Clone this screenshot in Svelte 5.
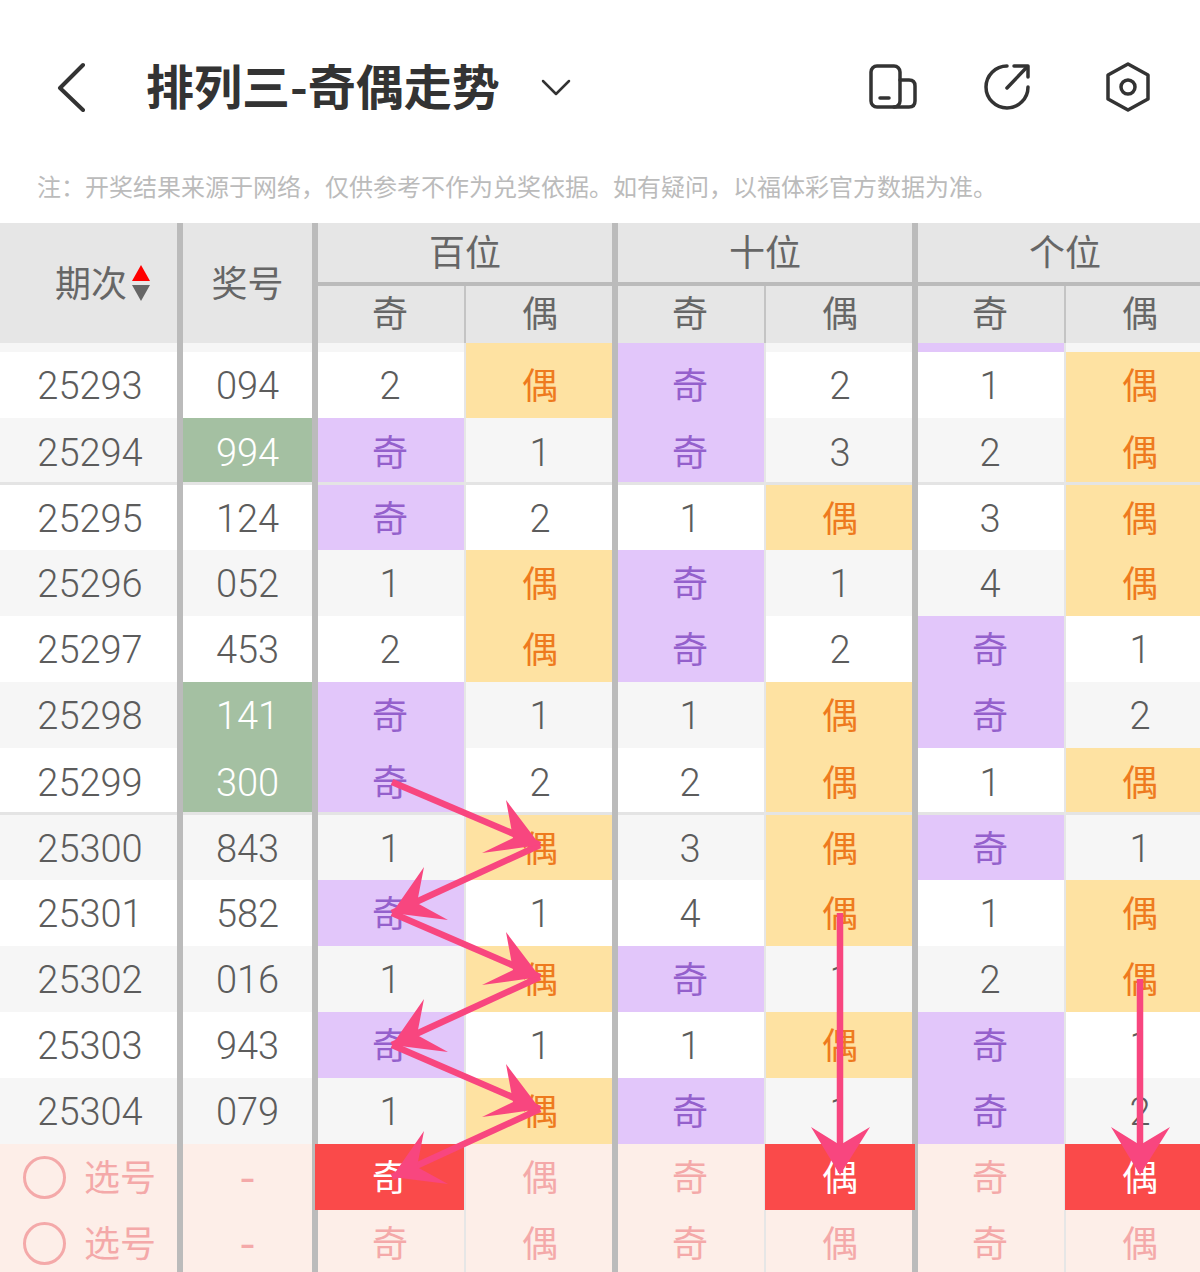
<script>
	// o = 奇 hit, e = 偶 hit, number = miss count
	const rows = [
		["25293", "094", false, [2, "e", "o", 2, 1, "e"]],
		["25294", "994", true, ["o", 1, "o", 3, 2, "e"]],
		["25295", "124", false, ["o", 2, 1, "e", 3, "e"]],
		["25296", "052", false, [1, "e", "o", 1, 4, "e"]],
		["25297", "453", false, [2, "e", "o", 2, "o", 1]],
		["25298", "141", true, ["o", 1, 1, "e", "o", 2]],
		["25299", "300", true, ["o", 2, 2, "e", 1, "e"]],
		["25300", "843", false, [1, "e", 3, "e", "o", 1]],
		["25301", "582", false, ["o", 1, 4, "e", 1, "e"]],
		["25302", "016", false, [1, "e", "o", 1, 2, "e"]],
		["25303", "943", false, ["o", 1, 1, "e", "o", 1]],
		["25304", "079", false, [1, "e", "o", 1, "o", 2]]
	];
	const peek = ["", "e", "o", "", "o", ""];
	const groups = ["百位", "十位", "个位"];
	const picks = [[0, 3, 5], []];

	const label = (v) => (v === "o" ? "奇" : v === "e" ? "偶" : v);
	const colClass = (i) => (i % 2 == 0 ? "major" : "minor");

	// zigzag through the 百位 column, from 25299 down to the pick row
	const slants = [
		[392, 782, 540, 845],
		[540, 845, 392, 913],
		[392, 913, 540, 977],
		[540, 977, 392, 1045],
		[392, 1045, 540, 1109],
		[540, 1109, 392, 1177]
	];
	const heads = [0, 1, 2, 3, 4, 5].map((i) => {
		const dy = 132 * Math.floor(i / 2);
		return i % 2 == 0
			? `540,${845 + dy} 506,${800 + dy} 513,${838 + dy} 482,${853 + dy}`
			: `392,${913 + dy} 424,${867 + dy} 417,${903 + dy} 448,${920 + dy}`;
	});
</script>

<div class="page">
	<nav class="nav">
		<svg class="back" width="32" height="50" viewBox="0 0 32 50">
			<path d="M27 3 L4 26 L27 48" />
		</svg>
		<h1 class="title">排列三-奇偶走势</h1>
		<svg class="caret" width="30" height="18" viewBox="0 0 30 18">
			<path d="M2 3 L15 16 L28 3" />
		</svg>
		<div class="tools">
			<svg width="48" height="46" viewBox="0 0 48 46">
				<rect x="2" y="2" width="29" height="41" rx="6" />
				<path d="M31 16 H40 Q46 16 46 22 V37 Q46 43 40 43 H25" />
				<path d="M11 34 H20" />
			</svg>
			<svg width="48" height="48" viewBox="0 0 48 48">
				<path d="M24 3 A21 21 0 1 0 45 24" />
				<path d="M24 25 L44 4" />
				<path d="M31 3 H45 V14" />
			</svg>
			<svg class="gear" width="48" height="50" viewBox="0 0 48 50">
				<path d="M24 2 L44 13 V37 L24 48 L4 37 V13 Z" />
				<circle cx="24" cy="25" r="7" />
			</svg>
		</div>
	</nav>
	<p class="note">注&#xFF1A;开奖结果来源于网络&#xFF0C;仅供参考不作为兑奖依据。如有疑问&#xFF0C;以福体彩官方数据为准。</p>

	<div class="table">
		<div class="head">
			<div class="hcell period">
				期次
				<svg class="sort" width="18" height="36" viewBox="0 0 18 36">
					<path class="up" d="M9 0 L18 16 H0 Z" />
					<path class="down" d="M0 20 H18 L9 36 Z" />
				</svg>
			</div>
			<div class="hcell prize">奖号</div>
			{#each groups as g}
				<div class="hgroup">
					<div class="gname">{g}</div>
					<div class="gsub">
						<span>奇</span>
						<span>偶</span>
					</div>
				</div>
			{/each}
		</div>

		<div class="row peek">
			<div class="cell"></div>
			<div class="cell major"></div>
			{#each peek as v, i}
				<div class="cell {colClass(i)} {v}"></div>
			{/each}
		</div>

		{#each rows as r, n}
			<div class="row" class:alt={n % 2 == 1} class:line={n == 1 || n == 6}>
				<div class="cell issue">{r[0]}</div>
				<div class="cell major prizeval" class:hot={r[2]}>{r[1]}</div>
				{#each r[3] as v, i}
					<div class="cell {colClass(i)} {v}">{label(v)}</div>
				{/each}
			</div>
		{/each}

		{#each picks as sel}
			<div class="row pick">
				<div class="cell chooser">
					<span class="ring"></span>
					选号
				</div>
				<div class="cell major prizeval dash">-</div>
				{#each ["奇", "偶", "奇", "偶", "奇", "偶"] as t, i}
					<div class="cell {colClass(i)}" class:sel={sel.includes(i)}>{t}</div>
				{/each}
			</div>
		{/each}
	</div>

	<svg class="arrows" width="1200" height="1272" viewBox="0 0 1200 1272">
		{#each slants as s}
			<line x1={s[0]} y1={s[1]} x2={s[2]} y2={s[3]} />
		{/each}
		{#each heads as h}
			<polygon points={h} />
		{/each}
		<line x1="840" y1="913" x2="840" y2="1150" />
		<polygon points="840,1175 811,1127 840,1145 870,1127" />
		<line x1="1140" y1="979" x2="1140" y2="1150" />
		<polygon points="1140,1175 1111,1127 1140,1145 1170,1127" />
	</svg>
</div>

<style>
	:global(body) {
		margin: 0;
		background: #fff;
	}
	.page {
		position: relative;
		width: 1200px;
		height: 1272px;
		overflow: hidden;
		font-family: Roboto, "Noto Sans CJK SC", sans-serif;
		color: #666;
	}
	.nav {
		display: flex;
		align-items: center;
		height: 174px;
		padding: 0 48px 0 56px;
		box-sizing: border-box;
	}
	.nav svg {
		fill: none;
		stroke: #333;
		stroke-width: 3.5;
		stroke-linecap: round;
		stroke-linejoin: round;
		flex: none;
	}
	.nav .back {
		stroke-width: 4;
	}
	.nav .caret {
		stroke-width: 2.5;
		margin-left: 41px;
	}
	.title {
		margin: 0 0 6px 58px;
		font-family: "Noto Sans CJK SC", sans-serif;
		font-size: 48px;
		font-weight: 700;
		color: #333;
		white-space: nowrap;
	}
	.tools {
		display: flex;
		align-items: center;
		gap: 66px;
		margin-left: auto;
	}
	.nav .gear {
		margin-left: 7px;
	}
	.note {
		margin: 0;
		height: 49px;
		padding-left: 37px;
		font-family: "Noto Sans CJK SC", sans-serif;
		font-size: 24px;
		line-height: 24px;
		color: #bbb;
		white-space: nowrap;
	}

	.head {
		display: grid;
		grid-template-columns: 177px 135px 300px 300px 300px;
		grid-template-rows: 120px;
		background: #e6e6e6;
		font-size: 36px;
		line-height: 1;
		font-family: "Noto Sans CJK SC", sans-serif;
	}
	.hcell {
		display: flex;
		align-items: center;
		justify-content: center;
		padding-bottom: 5px;
	}
	.period {
		justify-content: flex-start;
		gap: 5px;
		padding-left: 55px;
	}
	.sort {
		margin-top: 5px;
	}
	.sort .up {
		fill: #f00;
	}
	.sort .down {
		fill: #666;
	}
	.prize,
	.hgroup {
		border-left: 6px solid #bbb;
	}
	.hgroup {
		display: flex;
		flex-direction: column;
		min-height: 0;
	}
	.gname {
		flex: none;
		height: 63px;
		box-sizing: border-box;
		padding-bottom: 6px;
		display: flex;
		align-items: center;
		justify-content: center;
		border-bottom: 4px solid #bbb;
	}
	.gsub {
		flex: 1;
		display: grid;
		grid-template-columns: 146px 1fr;
	}
	.gsub span {
		display: flex;
		align-items: center;
		justify-content: center;
		padding: 0 2px 8px 0;
	}
	.gsub span + span {
		border-left: 2px solid #c4c4c4;
		padding: 0 0 8px 2px;
	}

	.row {
		display: grid;
		grid-template-columns: 177px 135px 152px 148px 152px 148px 152px 148px;
		height: 66px;
		background: #fff;
	}
	.row.alt,
	.row.peek {
		background: #f6f6f6;
	}
	.row.peek {
		height: 9px;
	}
	.row.line {
		height: 67px;
	}
	.row.line + .row {
		height: 65px;
	}
	.cell {
		display: flex;
		align-items: center;
		justify-content: center;
		min-width: 0;
		padding-top: 2px;
		font-size: 38px;
		line-height: 1;
		font-weight: 350;
		color: #5c5c5c;
	}
	.issue {
		padding-left: 3px;
	}
	.major {
		border-left: 6px solid #bbb;
		padding-right: 2px;
	}
	.minor {
		border-left: 2px solid #e6e6e6;
		padding-left: 2px;
	}
	.prizeval {
		padding-right: 0;
	}
	.line .cell {
		box-shadow: inset 0 -3px 0 #e4e4e4;
	}
	.hot {
		background: #a4c0a2;
		color: #fff;
	}
	.o,
	.e,
	.pick .cell {
		padding-top: 0;
		padding-bottom: 4px;
		font-size: 36px;
		font-weight: 400;
		font-family: "Noto Sans CJK SC", sans-serif;
	}
	.o {
		background: #e2c6fa;
		color: #9460cc;
	}
	.e {
		background: #fee2a2;
		color: #ee7a1e;
	}
	.pick {
		background: #fdeee8;
	}
	.pick .cell {
		color: #f4a9a9;
	}
	.pick .chooser {
		justify-content: flex-start;
		gap: 18px;
		padding: 0 0 4px 23px;
	}
	.pick .dash {
		font-size: 46px;
		padding-bottom: 8px;
	}
	.ring {
		width: 37px;
		height: 37px;
		border: 3px solid #f4a9a9;
		border-radius: 50%;
		flex: none;
		margin-top: 4px;
	}
	.pick .sel {
		position: relative;
		z-index: 1;
		color: #fff;
	}
	.sel::before {
		content: "";
		position: absolute;
		z-index: -1;
		top: 0;
		bottom: 0;
		left: -1px;
		right: -3px;
		background: #fa4a4a;
	}
	.sel.major::before {
		left: -3px;
		right: 0;
	}

	.arrows {
		position: absolute;
		top: 0;
		left: 0;
		z-index: 2;
		pointer-events: none;
	}
	.arrows line {
		stroke: #f8467f;
		stroke-width: 6.5;
	}
	.arrows polygon {
		fill: #f8467f;
	}
</style>
